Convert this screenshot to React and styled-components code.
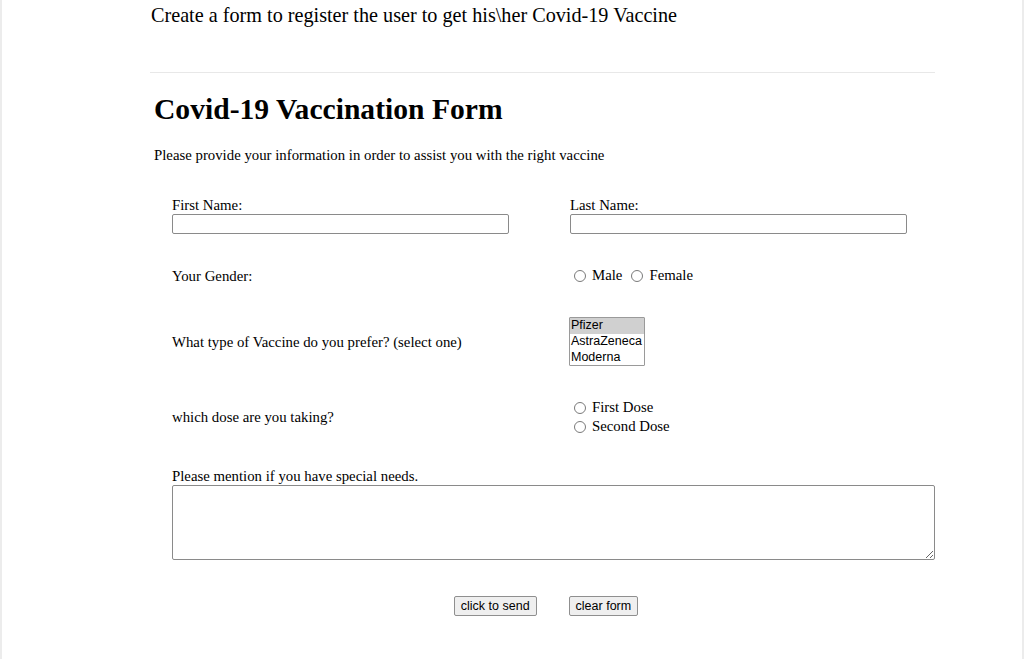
import React from "react";
import styled, { createGlobalStyle } from "styled-components";

const Global = createGlobalStyle`
  html, body { margin: 0; padding: 0; background: #fff; }
  body {
    font-family: "Liberation Serif", "Times New Roman", serif;
    color: #000;
  }
  #root { min-height: 659px; }
`;

const Frame = styled.div`
  min-height: 659px;
  border-left: 2px solid #ececec;
  border-right: 2px solid #ececec;
  box-sizing: border-box;
`;

const Page = styled.div`
  width: 785px;
  margin-left: 148px;
  padding-top: 3px;
`;

const Intro = styled.div`
  font-size: 20.2px;
  line-height: 24px;
  padding-left: 1px;
`;

const Rule = styled.hr`
  border: none;
  border-top: 1px solid #e8e8e8;
  margin: 45px 0 0;
`;

const Title = styled.h1`
  font-size: 29.6px;
  font-weight: bold;
  line-height: 34px;
  margin: 19px 0 0 4px;
`;

const Desc = styled.p`
  font-size: 14.8px;
  line-height: 18px;
  margin: 20px 0 0 4px;
`;

const Form = styled.form`
  padding-left: 22px;
  margin-top: 32px;
  display: flex;
  flex-direction: column;
`;

const Row = styled.div`
  display: grid;
  grid-template-columns: 398px 1fr;
  align-items: center;
  margin-top: ${(p) => p.$gap || 0}px;
`;

const Field = styled.div`
  display: flex;
  flex-direction: column;
  align-items: flex-start;
  margin-top: ${(p) => p.$gap || 0}px;
`;

const Label = styled.label`
  font-size: 14.8px;
  line-height: 18px;
`;

const TextInput = styled.input`
  box-sizing: border-box;
  width: 337px;
  height: 20px;
  border: 1px solid #8a8a8a;
  border-radius: 2px;
  margin: 0;
  padding: 1px 3px;
  background: #fff;
`;

const Choices = styled.div`
  display: flex;
  flex-direction: ${(p) => (p.$stack ? "column" : "row")};
  align-items: flex-start;
  gap: ${(p) => (p.$stack ? 0 : 9)}px;
  margin-left: 4px;
`;

const Choice = styled.label`
  display: flex;
  align-items: center;
  gap: 6px;
  font-size: 14.8px;
  line-height: 19px;
`;

const Radio = styled.input.attrs({ type: "radio" })`
  appearance: none;
  -webkit-appearance: none;
  width: 12px;
  height: 12px;
  margin: 0;
  border: 1px solid #7a7a7a;
  border-radius: 50%;
  background: #fff;
  box-sizing: border-box;
`;

const ListBox = styled.select`
  width: 76px;
  height: 49px;
  box-sizing: border-box;
  font-family: "Liberation Sans", Arial, sans-serif;
  font-size: 12.5px;
  border: 1px solid #9a9a9a;
  border-radius: 1px;
  padding: 0;
  margin: 0 0 0 -1px;
  overflow: hidden;
  option {
    padding: 0 1px;
    line-height: 16px;
    height: 16px;
  }
  option:checked {
    background: #d0d0d0 linear-gradient(#d0d0d0, #d0d0d0);
    color: #000;
  }
`;

const Notes = styled.textarea`
  box-sizing: border-box;
  width: 763px;
  height: 75px;
  border: 1px solid #8a8a8a;
  border-radius: 2px;
  margin: 0;
  display: block;
`;

const Actions = styled.div`
  display: flex;
  justify-content: center;
  gap: 32px;
  margin-top: 36px;
  padding-right: 15px;
`;

const Button = styled.button`
  font-family: "Liberation Sans", Arial, sans-serif;
  font-size: 12.5px;
  line-height: 15px;
  height: 20px;
  padding: 1px 6px;
  background: #efefef;
  border: 1px solid #8f8f8f;
  border-radius: 2px;
  color: #000;
`;

export default function App() {
  return (
    <>
      <Global />
      <Frame>
        <Page>
          <Intro>Create a form to register the user to get his\her Covid-19 Vaccine</Intro>
          <Rule />
          <Title>Covid-19 Vaccination Form</Title>
          <Desc>Please provide your information in order to assist you with the right vaccine</Desc>
          <Form onSubmit={(e) => e.preventDefault()}>
            <Row>
              <Field>
                <Label htmlFor="fn">First Name:</Label>
                <TextInput id="fn" type="text" />
              </Field>
              <Field>
                <Label htmlFor="ln">Last Name:</Label>
                <TextInput id="ln" type="text" />
              </Field>
            </Row>
            <Row $gap={32}>
              <Label>Your Gender:</Label>
              <Choices>
                <Choice><Radio name="gender" />Male</Choice>
                <Choice><Radio name="gender" />Female</Choice>
              </Choices>
            </Row>
            <Row $gap={32}>
              <Label>What type of Vaccine do you prefer? (select one)</Label>
              <ListBox size={3} defaultValue="Pfizer">
                <option>Pfizer</option>
                <option>AstraZeneca</option>
                <option>Moderna</option>
              </ListBox>
            </Row>
            <Row $gap={32}>
              <Label>which dose are you taking?</Label>
              <Choices $stack>
                <Choice><Radio name="dose" />First Dose</Choice>
                <Choice><Radio name="dose" />Second Dose</Choice>
              </Choices>
            </Row>
            <Field $gap={31}>
              <Label htmlFor="needs">Please mention if you have special needs.</Label>
              <Notes id="needs" />
            </Field>
            <Actions>
              <Button type="submit">click to send</Button>
              <Button type="reset">clear form</Button>
            </Actions>
          </Form>
        </Page>
      </Frame>
    </>
  );
}
